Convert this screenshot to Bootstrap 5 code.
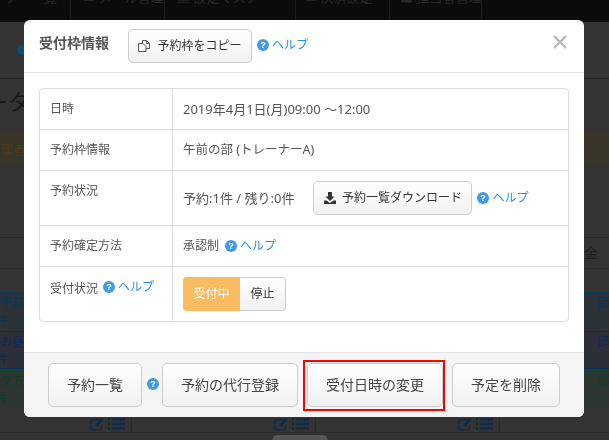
<!DOCTYPE html>
<html lang="ja">
<head>
<meta charset="utf-8">
<title>受付枠情報</title>
<link href="https://cdn.jsdelivr.net/npm/bootstrap@5.3.0/dist/css/bootstrap.min.css" rel="stylesheet">
<style>
html,body{height:440px;overflow:hidden}
body{background:#333;font-family:"Noto Sans","Noto Sans CJK JP",sans-serif;font-size:12px;color:#555;overflow:hidden}
.topbar{height:22px;background:#0a0b0d;color:#26282b;font-size:13px;line-height:14px;overflow:hidden}
.tb-item{border-right:1px solid #1a1b1e;height:22px;white-space:nowrap;overflow:hidden}
.tb-text{margin-top:-10px}
.tb1{width:71px;padding-left:5px}.tb2{width:94px;padding-left:12px}.tb3{width:131px;padding-left:12px}.tb4{width:94px;padding-left:9px}.tb5{padding-left:10px}
.infoband{height:57px;border-bottom:1px solid #262626;padding:23px 0 0 17px}
.dotmark{width:10px;height:10px;border-radius:50%;background:#0b4a7d}
.pagehead{height:52px;font-size:22px;line-height:44px;color:#191919;white-space:nowrap;margin-left:-14px}
.warnband{height:32px;background:#38352a;color:#4a3b20;font-size:13px;line-height:36px;white-space:nowrap}
.spacer1{height:75px;border-bottom:1px solid #292929}
.dayhead{height:31px;border-bottom:1px solid #292929;color:#1f1f1f;font-size:14px;line-height:30px;padding-right:11px}
.spacer2{height:23px}
.slotrow{height:38px;margin-bottom:1px;font-size:12px;line-height:17.500px;padding-top:1px;white-space:nowrap;border-top:1px solid;border-bottom:1px solid}
.slotrow .cut{margin-left:-4px}
.slot-a{background:#2c3338;border-color:#0c3a5a;color:#0d3555}
.slot-b{background:#2d2f38;border-color:#0f2a55;color:#13284e}
.slot-c{background:#2c352f;border-color:#0b4a2c;color:#0e3f28}
.toolrow{height:24px;margin-left:-52px;border-bottom:1px solid #292929;width:800px}
.toolcell{width:184px;height:24px;border-right:1px solid #292929;padding:8px 6px 0 0}
.pillstub{width:56px;height:10px;background:#555;border-radius:6px 6px 0 0;position:fixed;left:272px;top:435px}
.sheet{position:fixed;left:24px;top:20px;width:560px;height:397px;background:#fff;border-radius:6px;overflow:hidden}
.sheet-head{height:53px;border-bottom:1px solid #e5e5e5;padding:9px 16px 0 15px}
.sheet-title{font-size:14px;line-height:28px;font-weight:700;color:#555;margin-right:19px}
.soft-btn{background:linear-gradient(#fff,#f1f1f1);border:1px solid #ccc;border-radius:5px;color:#333;font-size:12px;line-height:18px;padding:0;display:inline-flex;align-items:center;justify-content:center}
.copy-btn{width:124px;height:34px;gap:7px;margin-right:5px}
.dl-btn{width:159px;height:34px;gap:6px;margin:0 5px 0 19px}
.helpmark{width:12px;height:12px;flex:none;display:inline-block}
.helplink{color:#2f8fe8;text-decoration:none;font-size:12px;white-space:nowrap}
.helpgroup{display:inline-flex;align-items:center;gap:3px}
.head-help{height:31px}
.xclose{margin-left:auto;margin-top:6px;margin-right:1px;background:none;border:0;padding:0;line-height:0}
.sheet-body{height:279px;padding:15px 15px 0}
.infotable{border:1px solid #ddd;border-radius:4px;overflow:hidden;height:234px}
.inforow{border-bottom:1px solid #ddd}
.inforow:last-child{border-bottom:0}
.ir1,.ir2,.ir4{height:41px}.ir3,.ir5{height:55px}
.infokey{width:133px;flex:none;border-right:1px solid #ddd;padding:11px 0 0 10px;line-height:18px}
.infoval{padding-left:10px;display:flex;align-items:center;line-height:18px;color:#555}
.ir1 .infoval{padding-bottom:1px}
.fs-wide{font-size:13px}
.fs-mid{font-size:12.500px}
.ir4 .helpgroup{margin-left:6px}
.ir5 .helpgroup{margin-left:5px}
.ir5 .infoval{padding-bottom:2px}
.seg{display:inline-flex;height:34px}
.seg-on{width:57px;background:#f9bb5f;color:#fff;border-radius:4px 0 0 4px;display:flex;align-items:center;justify-content:center}
.seg-off{width:46px;border-radius:0 4px 4px 0;border-left:0}
.sheet-foot{height:65px;background:#f5f5f5;border-top:1px solid #e2e2e2;padding:10px 24px 0}
.foot-btn{height:44px;font-size:14px;color:#444}
.fb1{width:94px;margin-right:5px}.fb2{width:136px;margin-left:3px}.fb3{width:136px;margin-left:9px}.fb4{width:108px;margin-left:9px}
.foot-help{margin-top:15px}
.redmark{position:absolute;left:279px;top:340px;width:142px;height:51px;border:2px solid #f00;pointer-events:none}
</style>
</head>
<body>
<div class="topbar d-flex">
  <div class="tb-item tb1"><div class="tb-text">ター一覧</div></div>
  <div class="tb-item tb2"><div class="tb-text">▭ メール管理</div></div>
  <div class="tb-item tb3"><div class="tb-text">▦ 設定マスタ</div></div>
  <div class="tb-item tb4"><div class="tb-text">▭ 決済設定</div></div>
  <div class="tb-item tb5"><div class="tb-text">■ 担当者管理</div></div>
</div>
<div class="infoband"><div class="dotmark"></div></div>
<div class="pagehead">ータ</div>
<div class="warnband">理者</div>
<div class="spacer1"></div>
<div class="dayhead text-end">金</div>
<div class="spacer2"></div>
<div class="slotrow slot-a d-flex justify-content-between"><div>午前の<br><span class="cut">件</span></div><div>部</div></div>
<div class="slotrow slot-b d-flex justify-content-between"><div>お昼の<br><span class="cut">件</span></div><div>部</div></div>
<div class="slotrow slot-c d-flex justify-content-between"><div>夕方の<br><span class="cut">件</span></div><div>部</div></div>
<div class="toolrow d-flex">
  <div class="toolcell d-flex justify-content-end"><svg width="36" height="14" viewBox="0 0 36 14"><use href="#tools"/></svg></div>
  <div class="toolcell d-flex justify-content-end"><svg width="36" height="14" viewBox="0 0 36 14"><use href="#tools"/></svg></div>
  <div class="toolcell d-flex justify-content-end"><svg width="36" height="14" viewBox="0 0 36 14"><use href="#tools"/></svg></div>
</div>
<div class="pillstub"></div>

<svg width="0" height="0" class="d-block">
  <defs>
    <g id="tools" fill="none" stroke="#0f2c47">
      <path d="M11 3H3a1.500 1.500 0 0 0-1.500 1.500v7A1.500 1.500 0 0 0 3 13h8a1.500 1.500 0 0 0 1.500-1.500V8" stroke-width="1.400"/>
      <path d="M6 9.500 7 7l6-6 2 2-6 6z" fill="#0f2c47" stroke="none"/>
      <path d="M19 2.500h2M19 7h2M19 11.500h2M23 2.500h13M23 7h13M23 11.500h13" stroke-width="2.600"/>
    </g>
    <g id="help">
      <circle cx="6" cy="6" r="6" fill="#419ae6"/>
      <text x="6" y="9.200" text-anchor="middle" font-size="9" font-weight="700" fill="#fff" font-family="Liberation Sans, sans-serif">?</text>
    </g>
  </defs>
</svg>

<div class="sheet">
  <div class="sheet-head d-flex align-items-start">
    <div class="sheet-title">受付枠情報</div>
    <button type="button" class="soft-btn copy-btn">
      <svg width="12" height="12" viewBox="0 0 12 12" fill="none" stroke="#555" stroke-width="1"><path d="M4.500 4V.5h4l3 3v5H8"/><path d="M.5 3.500H5l3 3v5H.5z"/><path d="M8.500.5v3h3"/></svg>
      予約枠をコピー
    </button>
    <span class="helpgroup head-help"><svg class="helpmark" viewBox="0 0 12 12"><use href="#help"/></svg><a class="helplink" href="#">ヘルプ</a></span>
    <button type="button" class="xclose" aria-label="閉じる"><svg width="14" height="14" viewBox="0 0 14 14" stroke="#b9b9b9" stroke-width="2.400"><path d="M1 1l12 12M13 1 1 13"/></svg></button>
  </div>
  <div class="sheet-body">
    <div class="infotable">
      <div class="inforow ir1 d-flex"><div class="infokey">日時</div><div class="infoval fs-wide">2019年4月1日(月)09:00 〜12:00</div></div>
      <div class="inforow ir2 d-flex"><div class="infokey">予約枠情報</div><div class="infoval fs-mid">午前の部 (トレーナーA)</div></div>
      <div class="inforow ir3 d-flex"><div class="infokey">予約状況</div><div class="infoval fs-wide">予約:1件 / 残り:0件
        <button type="button" class="soft-btn dl-btn">
          <svg width="12" height="12" viewBox="0 0 12 12" fill="#333"><path d="M4 0h4v4.500h2.500L6 9 1.500 4.500H4z"/><path d="M0 8.500h2.500L6 11l3.500-2.500H12V12H0z"/></svg>
          予約一覧ダウンロード
        </button>
        <span class="helpgroup"><svg class="helpmark" viewBox="0 0 12 12"><use href="#help"/></svg><a class="helplink" href="#">ヘルプ</a></span></div></div>
      <div class="inforow ir4 d-flex"><div class="infokey">予約確定方法</div><div class="infoval">承認制
        <span class="helpgroup"><svg class="helpmark" viewBox="0 0 12 12"><use href="#help"/></svg><a class="helplink" href="#">ヘルプ</a></span></div></div>
      <div class="inforow ir5 d-flex"><div class="infokey">受付状況<span class="helpgroup"><svg class="helpmark" viewBox="0 0 12 12"><use href="#help"/></svg><a class="helplink" href="#">ヘルプ</a></span></div>
        <div class="infoval"><div class="seg"><div class="seg-on">受付中</div><button type="button" class="soft-btn seg-off">停止</button></div></div></div>
    </div>
  </div>
  <div class="sheet-foot d-flex align-items-start">
    <button type="button" class="soft-btn foot-btn fb1">予約一覧</button>
    <svg class="helpmark foot-help" viewBox="0 0 12 12"><use href="#help"/></svg>
    <button type="button" class="soft-btn foot-btn fb2">予約の代行登録</button>
    <button type="button" class="soft-btn foot-btn fb3">受付日時の変更</button>
    <button type="button" class="soft-btn foot-btn fb4">予定を削除</button>
  </div>
  <div class="redmark"></div>
</div>
</body>
</html>
